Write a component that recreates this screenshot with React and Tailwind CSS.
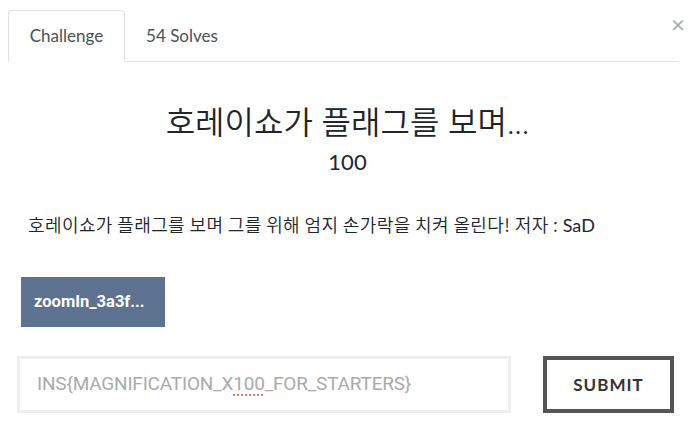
export default function App() {
  return (
    <div className="w-[695px] h-[429px] bg-white relative overflow-hidden" style={{ fontFamily: 'Lato, "Noto Sans CJK KR", sans-serif' }}>
      <button className="absolute right-[10px] top-[12px] text-[24px] leading-none text-[#aaaaaa] font-[Lato]">×</button>
      <div className="pt-[10px] px-[8px] w-[686px]">
        <div className="flex border-b border-[#dee2e6] h-[52px]">
          <div className="w-[117px] h-[52px] -mb-px border border-[#dee2e6] border-b-white rounded-t-[4px] bg-white flex items-center justify-center text-[17px] text-[#495057]">
            Challenge
          </div>
          <div className="w-[114px] flex items-center justify-center text-[17px] text-[#495057]">54 Solves</div>
        </div>
      </div>
      <div className="flex flex-col items-center mt-[38px]">
        <h1 className="text-[32px] leading-[44px] text-[#212529]" style={{ fontFamily: 'Lato, "Noto Sans CJK KR", sans-serif', fontWeight: 350 }}>호레이쇼가 플래그를 보며...</h1>
        <div className="text-[22px] leading-[30px] mt-[3px] text-[#212529]">100</div>
      </div>
      <p className="ml-[28px] mt-[34px] text-[18px] leading-[26px] text-[#212529]" style={{ fontFamily: '"Noto Sans CJK KR", Lato, sans-serif', fontWeight: 350, letterSpacing: '0.4px' }}>
        호레이쇼가 플래그를 보며 그를 위해 엄지 손가락을 치켜 올린다! 저자 : <span style={{ fontFamily: 'Lato, sans-serif', fontWeight: 400, letterSpacing: 0 }}>SaD</span>
      </p>
      <div className="ml-[21px] mt-[39px] w-[144px] h-[50px] bg-[#5c7290] flex items-center px-[13px] text-white font-bold text-[16.5px]" style={{ fontFamily: 'Roboto, sans-serif' }}>
        zoomIn_3a3f...
      </div>
      <div className="flex mt-[29px] ml-[17px] items-center">
        <div className="w-[494px] h-[57px] border-[3px] border-[#eeeeee] flex items-center pl-[17px] text-[19px] text-[#aaaaaa]" style={{ fontFamily: 'Roboto, sans-serif', letterSpacing: '-0.2px' }}>
          INS{'{'}MAGNIFICATION_X<span className="underline decoration-dotted decoration-[#ff6b6b] underline-offset-[4px]">100</span>_FOR_STARTERS{'}'}
        </div>
        <div className="ml-[32px] w-[131px] h-[57px] border-[4px] border-[#555555] flex items-center justify-center font-bold text-[17px] tracking-[1px] text-[#333]">
          SUBMIT
        </div>
      </div>
    </div>
  );
}
